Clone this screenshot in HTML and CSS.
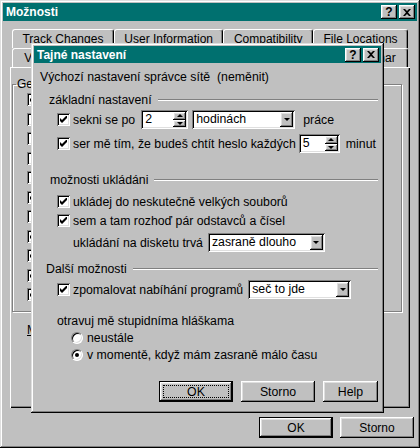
FILE: index.html
```html
<!DOCTYPE html>
<html lang="cs">
<head>
  <meta charset="UTF-8" />
  <title>Možnosti</title>
  <link rel="stylesheet" href="styles.css">
</head>
<body>
  <div class="window">
    <div class="titlebar">
      <span class="title">Možnosti</span>
      <span class="title-buttons">
        <span class="tb-btn">?</span>
        <span class="tb-btn"><svg width="8" height="7" viewBox="0 0 8 7"><path d="M0 0h2l2 2 2-2h2L5 3.5 8 7H6L4 5 2 7H0l3-3.5z" fill="#000"/></svg></span>
      </span>
    </div>

    <div class="tabs">
      <div class="tab-row">
        <span class="tab">Track Changes</span>
        <span class="tab">User Information</span>
        <span class="tab">Compatibility</span>
        <span class="tab">File Locations</span>
      </div>
      <div class="tab-row">
        <span class="tab">View</span>
        <span class="tab active">General</span>
        <span class="tab">Edit</span>
        <span class="tab">Print</span>
        <span class="tab">Save</span>
        <span class="tab">Spelling &amp; Grammar</span>
      </div>
      <div class="panel">
        <fieldset class="group">
          <legend>General options</legend>
          <div class="opt"><span class="cb checked"></span></div>
          <div class="opt"><span class="cb"></span></div>
          <div class="opt"><span class="cb"></span></div>
          <div class="opt"><span class="cb"></span></div>
          <div class="opt"><span class="cb"></span></div>
          <div class="opt"><span class="cb checked"></span></div>
          <div class="opt"><span class="cb"></span></div>
          <div class="opt"><span class="cb checked"></span></div>
          <div class="opt"><span class="cb checked"></span></div>
          <div class="opt"><span class="cb checked"></span></div>
          <div class="opt"><span class="cb checked"></span></div>
        </fieldset>
        <div class="units"><u>M</u>easurement units:</div>
      </div>
    </div>

    <div class="actions outer-actions">
      <button class="btn wide default">OK</button>
      <button class="btn wide">Storno</button>
    </div>

    <!-- the secret settings dialog sits over the options window -->
    <div class="dialog">
      <div class="titlebar small">
        <span class="title">Tajné nastavení</span>
        <span class="title-buttons">
          <span class="tb-btn">?</span>
          <span class="tb-btn"><svg width="8" height="7" viewBox="0 0 8 7"><path d="M0 0h2l2 2 2-2h2L5 3.5 8 7H6L4 5 2 7H0l3-3.5z" fill="#000"/></svg></span>
        </span>
      </div>

      <div class="dialog-body">
        <div class="line intro">Výchozí nastavení správce sítě&nbsp; (neměnit)</div>

        <div class="heading h-basic"><span>základní nastavení</span><span class="rule"></span></div>
        <div class="row r1">
          <span class="cb checked"></span><span class="lbl">sekni se po</span>
          <span class="spin w47"><span class="value">2</span><span class="spin-btns"><span class="spin-btn"><i class="up"></i></span><span class="spin-btn"><i class="down"></i></span></span></span>
          <span class="select w103"><span class="value">hodinách</span><span class="drop"><i class="down"></i></span></span>
          <span class="after">práce</span>
        </div>
        <div class="row r2">
          <span class="cb checked"></span><span class="lbl">ser mě tím, že budeš chtít heslo každých</span>
          <span class="spin w41"><span class="value">5</span><span class="spin-btns"><span class="spin-btn"><i class="up"></i></span><span class="spin-btn"><i class="down"></i></span></span></span>
          <span class="after">minut</span>
        </div>

        <div class="heading h-save"><span>možnosti ukládáni</span><span class="rule"></span></div>
        <div class="row r3"><span class="cb checked"></span><span class="lbl">ukládej do neskutečně velkých souborů</span></div>
        <div class="row r4"><span class="cb checked"></span><span class="lbl">sem a tam rozhoď pár odstavců a čísel</span></div>
        <div class="row r5 plain">
          <span class="lbl">ukládání na disketu trvá</span>
          <span class="select w117"><span class="value">zasraně dlouho</span><span class="drop"><i class="down"></i></span></span>
        </div>

        <div class="heading h-more"><span>Další možnosti</span><span class="rule"></span></div>
        <div class="row r6">
          <span class="cb checked"></span><span class="lbl">zpomalovat nabíhání programů</span>
          <span class="select w103"><span class="value">seč to jde</span><span class="drop"><i class="down"></i></span></span>
        </div>

        <div class="line nag">otravuj mě stupidníma hláškama</div>
        <div class="radio-row rr1"><span class="radio"></span>neustále</div>
        <div class="radio-row rr2"><span class="radio on"></span>v momentě, když mám zasraně málo času</div>

        <div class="actions dialog-actions">
          <button class="btn wide default"><span class="focus">OK</span></button>
          <button class="btn wide">Storno</button>
          <button class="btn narrow">Help</button>
        </div>
      </div>
    </div>
  </div>
</body>
</html>
```

FILE: styles.css
```css
* {
  box-sizing: border-box;
}

body {
  margin: 0;
  background: #c0c0c0;
  font-family: "Liberation Sans", Arial, sans-serif;
  font-size: 12px;
  color: #000;
}

/* classic 3d frames */
.window,
.dialog {
  background: #c0c0c0;
  box-shadow: inset -1px -1px #000, inset 1px 1px #dfdfdf, inset -2px -2px #808080, inset 2px 2px #fff;
}

.window {
  position: relative;
  width: 420px;
  height: 448px;
  padding: 3px;
  display: flex;
  flex-direction: column;
}

.window > * {
  flex: none;
}

.titlebar {
  height: 18px;
  background: #00706f;
  color: #fff;
  font-weight: bold;
  display: flex;
  align-items: center;
  justify-content: space-between;
  padding: 0 2px 0 3px;
}

.title-buttons {
  display: flex;
  gap: 2px;
}

.tb-btn {
  width: 16px;
  height: 14px;
  background: #c0c0c0;
  color: #000;
  font-size: 12px;
  font-weight: bold;
  display: flex;
  align-items: center;
  justify-content: center;
  box-shadow: inset -1px -1px #000, inset 1px 1px #fff, inset -2px -2px #808080, inset 2px 2px #dfdfdf;
}

/* tabs of the options window */
.tabs {
  margin: 8px 7px 0;
}

.tab-row {
  display: flex;
  height: 19px;
  padding: 0 2px;
}

.tab {
  flex: 1 0 auto;
  padding: 0 8px;
  display: flex;
  align-items: center;
  justify-content: center;
  border-top: 1px solid #fff;
  border-left: 1px solid #fff;
  border-right: 1px solid #000;
  border-radius: 3px 3px 0 0;
  box-shadow: inset -1px 0 #808080;
}

.panel {
  height: 341px;
  padding: 11px 8px 0 2px;
  box-shadow: inset 1px 1px #fff, inset -1px -1px #000, inset -2px -2px #808080;
}

.group {
  margin: 0;
  padding: 0 0 6px 14px;
  border: 1px solid #808080;
  box-shadow: 1px 1px 0 #fff, inset 1px 1px 0 #fff;
}

.group legend {
  margin-left: -11px;
  padding: 0 1px;
  line-height: 12px;
}

.opt {
  height: 19.5px;
  display: flex;
  align-items: center;
}

.units {
  margin: 11px 0 0 15px;
}

/* form controls */
.cb {
  width: 13px;
  height: 13px;
  flex: none;
  background: #fff;
  box-shadow: inset 1px 1px #808080, inset -1px -1px #fff, inset 2px 2px #000, inset -2px -2px #dfdfdf;
}

.cb.checked {
  background: #fff url("data:image/svg+xml,%3Csvg xmlns='http://www.w3.org/2000/svg' width='7' height='7' viewBox='0 0 7 7'%3E%3Cpath d='M0 2L2 4L7 -1L7 2L2 7L0 5Z' fill='%23000'/%3E%3C/svg%3E") no-repeat 3px 3px;
}

.radio {
  width: 12px;
  height: 12px;
  flex: none;
  border-radius: 50%;
  background: #fff;
  border: 1px solid;
  border-color: #808080 #fff #fff #808080;
  box-shadow: inset 1px 1px 0 #000, inset -1px -1px 0 #dfdfdf;
  display: flex;
  align-items: center;
  justify-content: center;
}

.radio.on::after {
  content: "";
  width: 4px;
  height: 4px;
  border-radius: 50%;
  background: #000;
}

.spin,
.select {
  height: 19px;
  padding: 2px;
  background: #fff;
  display: flex;
  flex: none;
  box-shadow: inset 1px 1px #808080, inset -1px -1px #fff, inset 2px 2px #000, inset -2px -2px #dfdfdf;
}

.value {
  flex: 1;
  padding-left: 2px;
  line-height: 15px;
}

.spin-btns {
  width: 13px;
  display: flex;
  flex-direction: column;
}

.spin-btn,
.drop {
  flex: 1;
  background: #c0c0c0;
  display: flex;
  align-items: center;
  justify-content: center;
  box-shadow: inset -1px -1px #000, inset 1px 1px #fff, inset -2px -2px #808080, inset 2px 2px #dfdfdf;
}

.drop {
  flex: none;
  width: 13px;
}

.up,
.down {
  width: 0;
  height: 0;
  border-left: 3px solid transparent;
  border-right: 3px solid transparent;
}

.up {
  border-bottom: 3px solid #000;
}

.down {
  border-top: 3px solid #000;
}

.w41 { width: 41px; }
.w47 { width: 47px; }
.w103 { width: 103px; }
.w117 { width: 117px; }

/* secret settings dialog */
.dialog {
  position: absolute;
  left: 31px;
  top: 43px;
  width: 353px;
  height: 370px;
  padding: 3px;
}

.titlebar.small {
  height: 17px;
}

.dialog-body {
  padding: 6px 3px 0 6px;
  font-size: 12.3px;
  white-space: nowrap;
}

.line,
.heading {
  height: 16px;
  display: flex;
  align-items: center;
}

.heading .rule {
  flex: 1;
  margin-left: 6px;
  height: 2px;
  border-top: 1px solid #808080;
  border-bottom: 1px solid #fff;
}

.row {
  display: flex;
  align-items: center;
  height: 19px;
  padding-left: 17px;
}

.row .lbl {
  margin-left: 3px;
}

.row.plain {
  padding-left: 33px;
}

.row.plain .lbl {
  margin-left: 0;
}

.radio-row {
  display: flex;
  align-items: center;
  gap: 4px;
  height: 16px;
  padding-left: 31px;
}

.h-basic { margin-top: 7px; padding-left: 9px; }
.r1 { margin-top: 2px; }
.r1 .spin { margin-left: 6px; }
.r1 .select { margin-left: 4px; }
.r1 .after { margin-left: 8px; }
.r2 { margin-top: 5px; }
.r2 .spin { margin-left: 3px; }
.r2 .after { margin-left: 6px; }
.h-save { margin-top: 19px; padding-left: 10px; }
.r3 { margin-top: 4px; }
.r4 { margin-top: 0; }
.r5 { margin-top: 3px; }
.r5 .select { margin-left: 5px; }
.h-more { margin-top: 9px; padding-left: 6px; }
.r6 { margin-top: 3px; }
.r6 .select { margin-left: 5px; }
.nag { margin-top: 14px; padding-left: 17px; }
.rr1 { margin-top: 1px; }
.rr2 { margin-top: 1px; }

/* push buttons */
.actions {
  display: flex;
  justify-content: flex-end;
}

.outer-actions {
  margin: 9px 3px 0 0;
  gap: 7px;
}

.dialog-actions {
  margin-top: 18px;
  gap: 8px;
}

.btn {
  height: 21px;
  padding: 0;
  border: none;
  background: #c0c0c0;
  font: inherit;
  color: #000;
  display: flex;
  align-items: center;
  justify-content: center;
  box-shadow: inset -1px -1px #000, inset 1px 1px #fff, inset -2px -2px #808080, inset 2px 2px #dfdfdf;
}

.btn.wide { width: 74px; }
.btn.narrow { width: 55px; }

.btn.default {
  box-shadow: inset 0 0 0 1px #000, inset -2px -2px #000, inset 2px 2px #fff, inset -3px -3px #808080, inset 3px 3px #dfdfdf;
}

.btn .focus {
  align-self: stretch;
  flex: 1;
  margin: 4px;
  border: 1px dotted #000;
  display: flex;
  align-items: center;
  justify-content: center;
}
```
